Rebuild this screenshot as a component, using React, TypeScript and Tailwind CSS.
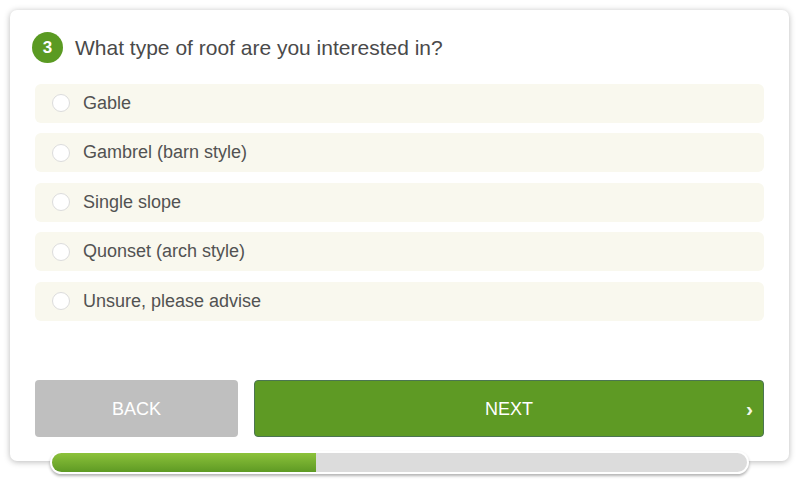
import React from "react";

const options = [
  "Gable",
  "Gambrel (barn style)",
  "Single slope",
  "Quonset (arch style)",
  "Unsure, please advise",
];

export default function App() {
  return (
    <div
      className="h-[485px] w-[800px] bg-white pl-[10px] pt-[10px]"
      style={{ fontFamily: '"Liberation Sans", Arial, sans-serif' }}
    >
      <div className="relative h-[451px] w-[779px] rounded-[7px] bg-white shadow-[0_1px_6px_rgba(0,0,0,0.28)]">
        <div className="flex items-center gap-[12px] pl-[22px] pt-[22px]">
          <div className="flex h-[31px] w-[31px] items-center justify-center rounded-full bg-[#5a9a22] text-[17px] font-semibold text-white">
            3
          </div>
          <h2 className="text-[21px] text-[#4a4a4a]">What type of roof are you interested in?</h2>
        </div>

        <div className="mx-[25px] mt-[20px] flex flex-col gap-[10.5px]">
          {options.map((label) => (
            <label
              key={label}
              className="flex h-[39px] items-center gap-[13px] rounded-[6px] bg-[#f9f8ee] pl-[17px] text-[18px] text-[#525252]"
            >
              <span className="h-[18px] w-[18px] rounded-full border border-[#dcdcdc] bg-white" />
              {label}
            </label>
          ))}
        </div>

        <div className="mx-[25px] mt-[59px] flex gap-[16px]">
          <button
            type="button"
            className="flex h-[57px] w-[203px] items-center justify-center rounded-[4px] bg-[#bfbfbf] pt-[2px] text-[18px] text-white"
          >
            BACK
          </button>
          <button
            type="button"
            className="relative flex h-[57px] flex-1 items-center justify-center rounded-[4px] border border-[#4b7552] bg-[#5e9a24] pt-[2px] text-[18px] text-white"
          >
            NEXT
            <span className="absolute right-[10px] top-1/2 -translate-y-1/2 text-[21px] font-bold leading-none text-[#f4f8e8]">›</span>
          </button>
        </div>

        <div className="absolute left-[40px] top-[441px] h-[23px] w-[699px] overflow-hidden rounded-full border-2 border-white bg-[#dcdcdc] shadow-[0_2px_3px_rgba(0,0,0,0.3)]">
          <div className="h-full w-[38%] bg-gradient-to-b from-[#8cc23a] to-[#5e9a24]" />
        </div>
      </div>
    </div>
  );
}
